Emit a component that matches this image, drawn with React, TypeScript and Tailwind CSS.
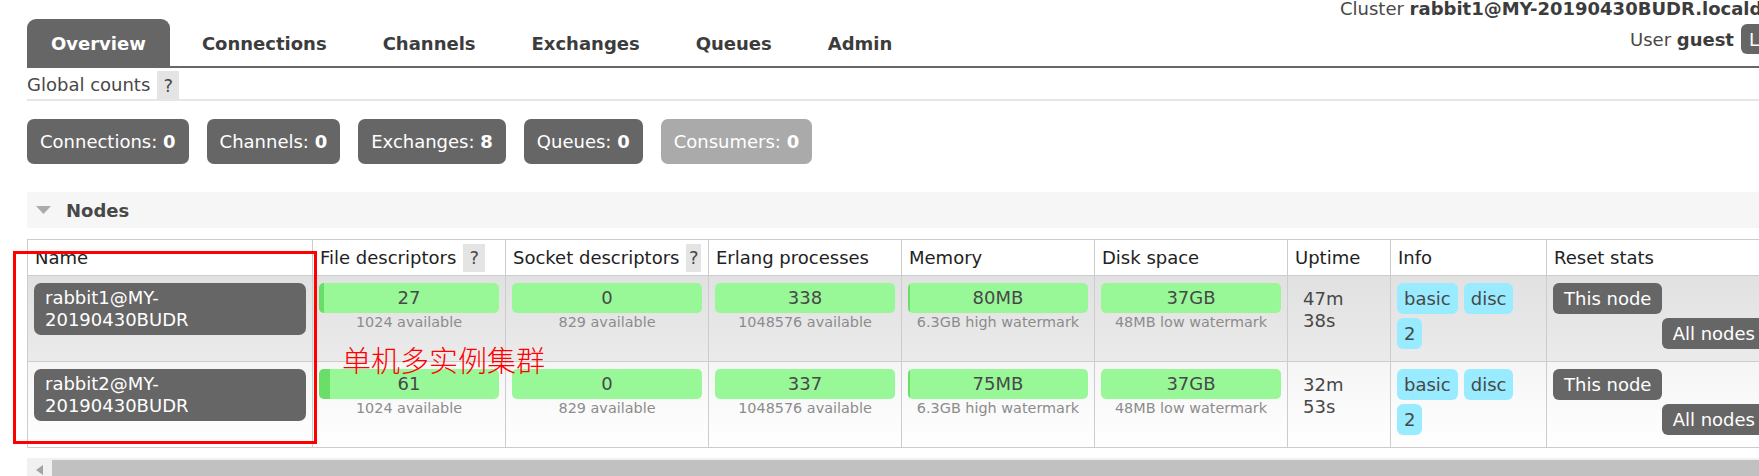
import React from 'react';

const tabs = ['Overview', 'Connections', 'Channels', 'Exchanges', 'Queues', 'Admin'];

const stats = [
  { label: 'Connections', value: 0, dim: false },
  { label: 'Channels', value: 0, dim: false },
  { label: 'Exchanges', value: 8, dim: false },
  { label: 'Queues', value: 0, dim: false },
  { label: 'Consumers', value: 0, dim: true },
];

interface Bar {
  value: string;
  sub: string;
  pct: number;
}

interface NodeRow {
  name: [string, string];
  bars: Bar[];
  uptime: [string, string];
}

const nodes: NodeRow[] = [
  {
    name: ['rabbit1@MY-', '20190430BUDR'],
    bars: [
      { value: '27', sub: '1024 available', pct: 2.6 },
      { value: '0', sub: '829 available', pct: 0 },
      { value: '338', sub: '1048576 available', pct: 0 },
      { value: '80MB', sub: '6.3GB high watermark', pct: 1.2 },
      { value: '37GB', sub: '48MB low watermark', pct: 0 },
    ],
    uptime: ['47m', '38s'],
  },
  {
    name: ['rabbit2@MY-', '20190430BUDR'],
    bars: [
      { value: '61', sub: '1024 available', pct: 6 },
      { value: '0', sub: '829 available', pct: 0 },
      { value: '337', sub: '1048576 available', pct: 0 },
      { value: '75MB', sub: '6.3GB high watermark', pct: 1.2 },
      { value: '37GB', sub: '48MB low watermark', pct: 0 },
    ],
    uptime: ['32m', '53s'],
  },
];

const Help = () => (
  <span className="inline-flex h-[28px] w-[22px] items-center justify-center bg-[#e4e4e4] text-[#484848]">?</span>
);

const Badge = ({ children }: { children: React.ReactNode }) => (
  <span className="inline-flex h-[31px] items-center rounded-[6px] bg-[#99ebff] px-[7px] text-[#484848]">{children}</span>
);

const Button = ({ children }: { children: React.ReactNode }) => (
  <span className="inline-flex h-[31px] items-center rounded-[6px] bg-[#666] px-[11px] text-white whitespace-nowrap">{children}</span>
);

const StatusBar = ({ bar }: { bar: Bar }) => (
  <div>
    <div className="relative h-[30px] overflow-hidden rounded-[5px] bg-[#98f898]">
      {bar.pct > 0 && <div className="absolute inset-y-0 left-0 bg-[#69df69]" style={{ width: `${bar.pct}%` }} />}
      <div className="relative text-center leading-[30px] text-[#484848]">{bar.value}</div>
    </div>
    <div className="text-center text-[14.4px] leading-[19px] text-[#8c8c8c] whitespace-nowrap">{bar.sub}</div>
  </div>
);

const columns = [
  { label: 'Name', w: 'w-[285px]' },
  { label: 'File descriptors', w: 'w-[193px]', help: true },
  { label: 'Socket descriptors', w: 'w-[203px]', help: true },
  { label: 'Erlang processes', w: 'w-[193px]' },
  { label: 'Memory', w: 'w-[193px]' },
  { label: 'Disk space', w: 'w-[193px]' },
  { label: 'Uptime', w: 'w-[103px]' },
  { label: 'Info', w: 'w-[156px]' },
  { label: 'Reset stats', w: 'w-[226px]' },
];

export default function App() {
  return (
    <div className="relative h-[476px] w-[1759px] overflow-hidden bg-white font-['DejaVu_Sans',sans-serif] text-[18px] text-[#484848]">
      <div className="ml-[27px]">
        {/* Header: tabs + cluster info */}
        <div className="grid h-[68px] grid-cols-[1313px_1fr] border-b-2 border-[#666]">
          <div className="flex items-end">
            {tabs.map((t, i) => (
              <div
                key={t}
                className={`mr-[8px] flex h-[47px] items-center rounded-t-[9px] px-[24px] pt-[2px] font-bold whitespace-nowrap ${
                  i === 0 ? 'bg-[#666] text-white' : 'text-[#3c3c3c]'
                }`}
              >
                {t}
              </div>
            ))}
          </div>
          <div className="whitespace-nowrap">
            <div className="leading-[18px]">
              Cluster <b className="text-[#3c3c3c]">rabbit1@MY-20190430BUDR.localdomain</b>
            </div>
            <div className="mt-[6px] flex h-[30px] items-center pl-[290px]">
              <span>
                User <b className="text-[#3c3c3c]">guest</b>
              </span>
              <span className="ml-[7px] inline-flex h-[30px] items-center rounded-[6px] bg-[#666] px-[8px] text-white">Log out</span>
            </div>
          </div>
        </div>

        {/* Global counts */}
        <div className="flex h-[33px] items-start gap-[7px] border-b-2 border-[#e6e6e6] pt-[3px]">
          <span className="leading-[28px]">Global counts</span>
          <Help />
        </div>

        <div className="mt-[18px] flex gap-[18px]">
          {stats.map((s) => (
            <div
              key={s.label}
              className={`flex h-[45px] items-center rounded-[7px] px-[13px] text-white whitespace-nowrap ${
                s.dim ? 'bg-[#aaa]' : 'bg-[#666]'
              }`}
            >
              {s.label}:&nbsp;<b>{s.value}</b>
            </div>
          ))}
        </div>

        {/* Nodes section */}
        <div className="mt-[28px] flex h-[36px] items-center bg-[#f6f6f6] pl-[9px]">
          <svg width="15" height="8" viewBox="0 0 15 8" className="mr-[15px]">
            <path d="M0 0 L15 0 L7.5 8 Z" fill="#aaa" />
          </svg>
          <span className="font-bold">Nodes</span>
        </div>

        <table className="mt-[11px] w-[1745px] max-w-none table-fixed border-collapse">
          <colgroup>
            {columns.map((c) => (
              <col key={c.label} className={c.w} />
            ))}
          </colgroup>
          <thead>
            <tr className="h-[36px]">
              {columns.map((c) => (
                <th key={c.label} className="border border-[#ccc] bg-white px-[7px] text-left font-normal text-[#222] whitespace-nowrap">
                  <div className="flex items-center gap-[7px]">
                    <span>{c.label}</span>
                    {c.help && <Help />}
                  </div>
                </th>
              ))}
            </tr>
          </thead>
          <tbody>
            {nodes.map((n, ri) => (
              <tr
                key={n.name[0]}
                className={`h-[86px] ${ri === 0 ? 'bg-linear-to-b from-[#e1e1e1] to-[#ebebeb]' : 'bg-linear-to-b from-[#f5f5f5] to-white'}`}
              >
                <td className="border border-[#ccc] px-[6px] pt-[7px] align-top">
                  <div className="rounded-[7px] bg-[#666] px-[11px] py-[4px] leading-[22px] text-white">
                    {n.name[0]}
                    <br />
                    {n.name[1]}
                  </div>
                </td>
                {n.bars.map((b, bi) => (
                  <td key={bi} className="border border-[#ccc] px-[6px] pt-[7px] align-top">
                    <StatusBar bar={b} />
                  </td>
                ))}
                <td className="border border-[#ccc] pl-[15px] pt-[12px] align-top leading-[22px]">
                  {n.uptime[0]}
                  <br />
                  {n.uptime[1]}
                </td>
                <td className="border border-[#ccc] px-[6px] pt-[7px] align-top">
                  <div className="flex flex-col gap-[4px]">
                    <div className="flex gap-[6px]">
                      <Badge>basic</Badge>
                      <Badge>disc</Badge>
                    </div>
                    <div className="flex">
                      <Badge>2</Badge>
                    </div>
                  </div>
                </td>
                <td className="border border-[#ccc] px-[6px] pt-[7px] align-top">
                  <div className="flex flex-col items-start gap-[4px]">
                    <Button>This node</Button>
                    <div className="self-end">
                      <Button>All nodes</Button>
                    </div>
                  </div>
                </td>
              </tr>
            ))}
          </tbody>
        </table>

        {/* horizontal scrollbar */}
        <div className="mt-[10px] flex h-[19px] bg-[#f1f1f1]">
          <div className="w-[25px] pl-[9px] pt-[7px]">
            <div className="h-0 w-0 border-y-[5px] border-r-[7px] border-y-transparent border-r-[#a3a3a3]" />
          </div>
          <div className="mt-[2px] flex-1 bg-[#c1c1c1]" />
        </div>
      </div>

      {/* annotation overlay */}
      <div className="pointer-events-none absolute left-[13px] top-[251px] h-[193px] w-[304px] border-[3px] border-[#ff0000]" />
      <div className="pointer-events-none absolute left-[342px] top-[345px] font-['Noto_Sans_CJK_SC',sans-serif] text-[29px] font-light leading-[29px] text-[#ff0000] whitespace-nowrap">
        单机多实例集群
      </div>
    </div>
  );
}
